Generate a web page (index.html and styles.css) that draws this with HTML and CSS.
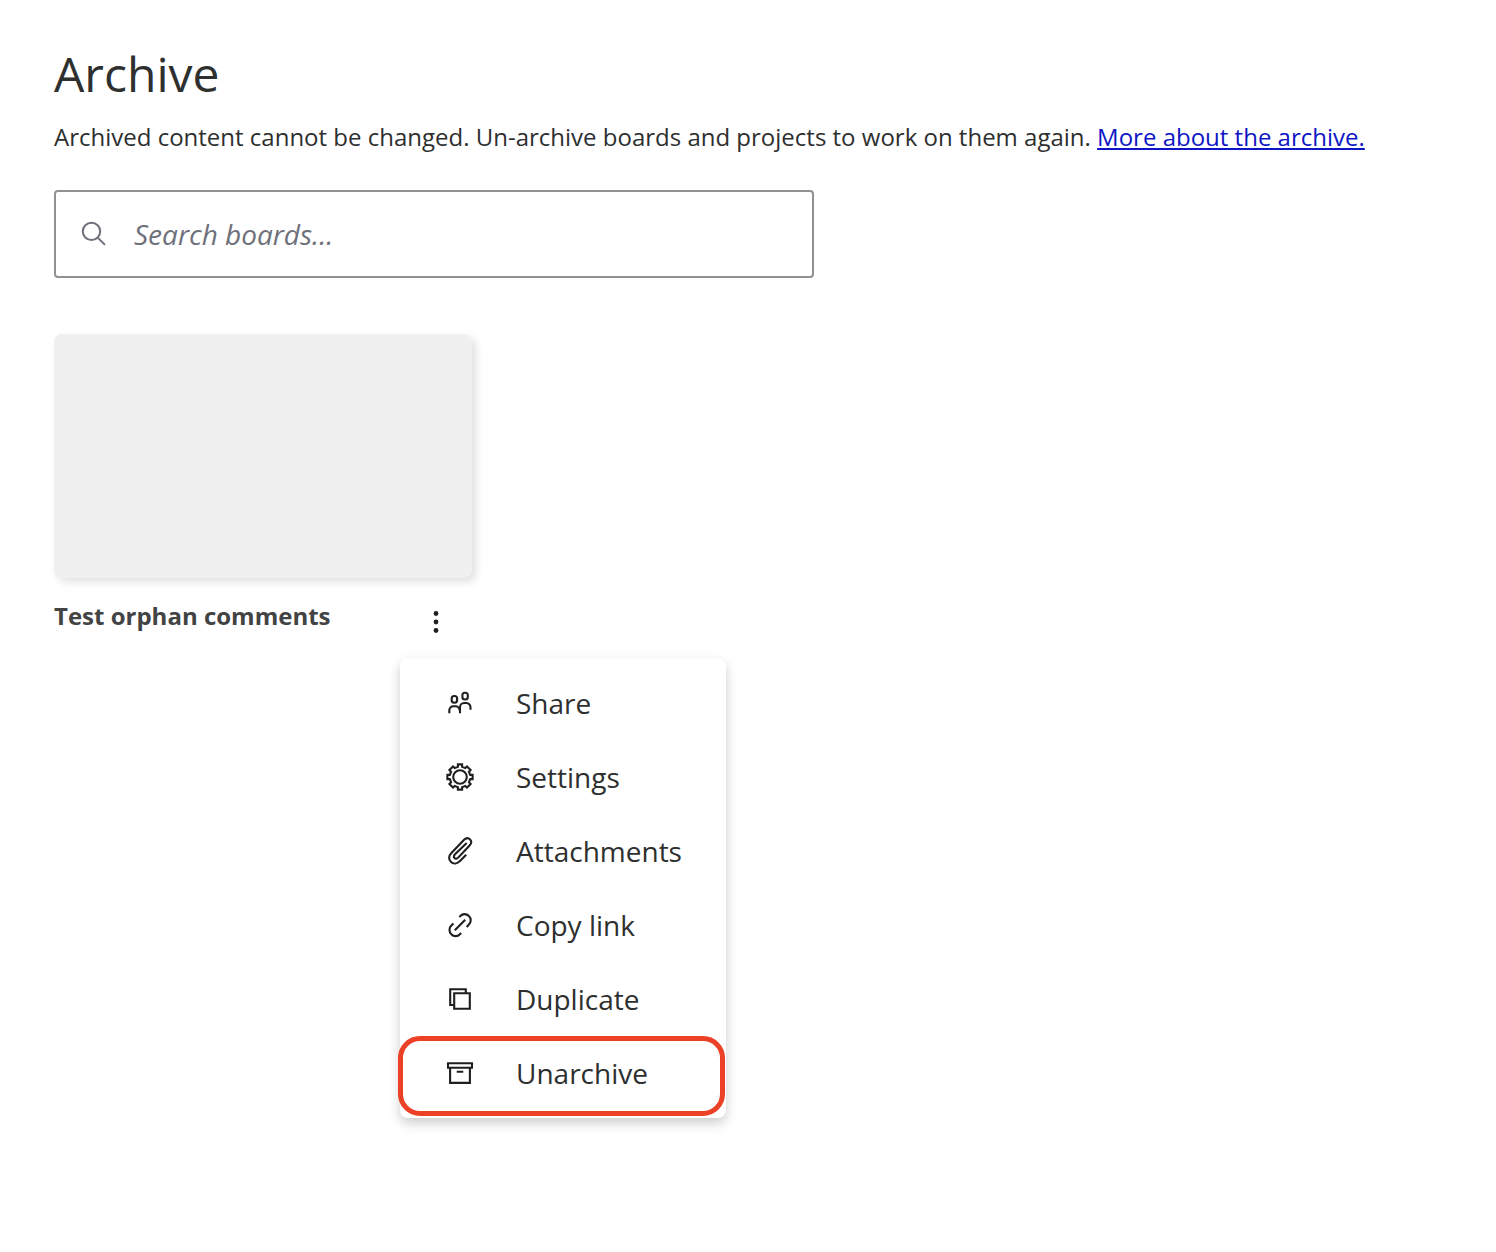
FILE: index.html
```html
<!DOCTYPE html>
<html lang="en">
<head>
  <meta charset="UTF-8" />
  <title>Archive</title>
  <link rel="stylesheet" href="styles.css">
</head>
<body>

  <h1>Archive</h1>
  <p class="intro">Archived content cannot be changed. Un-archive boards and projects to work on them again. <a href="#">More about the archive.</a></p>

  <label class="search">
    <svg class="icon" viewBox="0 0 32 32"><circle cx="13.5" cy="13.4" r="8.7"/><path d="M19.7 19.6l7.3 7.3"/></svg>
    <input type="text" placeholder="Search boards...">
  </label>

  <div class="board">
    <div class="thumbnail"></div>
    <div class="board-footer">
      <h2>Test orphan comments</h2>
      <div class="more">
        <button class="more-button" aria-label="More">
          <svg viewBox="0 0 32 32"><circle cx="16" cy="7.5" r="2.4"/><circle cx="16" cy="16" r="2.4"/><circle cx="16" cy="24.5" r="2.4"/></svg>
        </button>

        <ul class="menu">
          <li>
            <svg class="icon" viewBox="0 0 32 32"><rect x="7.7" y="9" width="5.4" height="6.7" rx="2.5"/><rect x="18.4" y="5.8" width="5.4" height="6.7" rx="2.5"/><path d="M5.3 26.2v-3a4 4 0 0 1 4-4h2.2a4 4 0 0 1 4 4M16 26.2v-6a4.2 4.2 0 0 1 4.2-4.2h2.1a4.2 4.2 0 0 1 4.2 4.2v2.6"/></svg>
            Share
          </li>
          <li>
            <svg class="icon" viewBox="0 0 32 32"><circle cx="16" cy="16" r="6.8"/><path d="M13.9 3.4h4.2v2.4l3.2 1.3 1.7-1.7 3.6 3.6-1.7 1.7 1.3 3.2h2.4v4.2h-2.4l-1.3 3.2 1.7 1.7-3.6 3.6-1.7-1.7-3.2 1.3v2.4h-4.2v-2.4l-3.2-1.3L9 26.6 5.4 23l1.7-1.7-1.3-3.2H3.4v-4.2h2.4l1.3-3.2L5.4 9 9 5.4l1.7 1.7 3.2-1.3z"/></svg>
            Settings
          </li>
          <li>
            <svg class="icon" viewBox="0 0 32 32"><path d="M22.2 19.8l-6.2 6.3c-2.8 2.8-6.5 3.2-9 .9s-2.6-6 .2-8.8L19.8 5.1c2.1-2.1 4.6-2.3 6.3-.7s1.6 4-.5 6.1L14.4 22.4c-1.3 1.4-2.9 1.7-3.9.7s-.8-2.5.5-3.8L22.7 8"/></svg>
            Attachments
          </li>
          <li>
            <svg class="icon" viewBox="0 0 32 32"><path d="M10.8 21.2L21.2 10.8M15.3 8l1-1a5.8 5.8 0 0 1 8.6 0 6 6 0 0 1 0 8.6l-2.2 2.3M9.5 14.4l-2.2 2.2a6 6 0 0 0 0 8.6 5.8 5.8 0 0 0 8.6 0l1.2-1.2"/></svg>
            Copy link
          </li>
          <li>
            <svg class="icon" viewBox="0 0 32 32"><path d="M10 22H6.2V6.2h15.6V10M10.2 10.2h15.6v15.6H10.2z"/></svg>
            Duplicate
          </li>
          <li class="highlighted">
            <svg class="icon" viewBox="0 0 32 32"><path d="M4 6.2h24v4.5H4zM6.1 10.7v15.2h19.8V10.7M12.7 14.8h6.6"/></svg>
            Unarchive
          </li>
        </ul>
      </div>
    </div>
  </div>

</body>
</html>
```

FILE: styles.css
```css
body {
  box-sizing: border-box;
  min-height: 1252px;
  margin: 0;
  padding: 42px 54px;
  font-family: 'Open Sans', sans-serif;
  color: #2e2f2f;
  background-color: #fff;
}

h1 {
  margin: 0 0 15px;
  font-size: 48px;
  font-weight: 400;
  line-height: 64px;
}

.intro {
  margin: 0 0 37px;
  font-size: 24px;
  line-height: 32px;
  white-space: nowrap;
}

.intro a {
  color: #0d15c4;
}

.icon {
  width: 32px;
  height: 32px;
  flex: none;
  fill: none;
  stroke: #1f1f1f;
  stroke-width: 2.1;
}

.search {
  display: flex;
  align-items: center;
  gap: 24px;
  box-sizing: border-box;
  width: 760px;
  height: 88px;
  padding: 0 22px;
  border: 2px solid #919193;
  border-radius: 4px;
}

.search .icon {
  stroke: #6e707a;
  stroke-width: 2;
}

.search input {
  flex: 1;
  padding: 0;
  border: none;
  outline: none;
  font: italic 28px 'Open Sans', sans-serif;
}

.search input::placeholder {
  color: #6e707a;
}

.board {
  width: 418px;
  margin-top: 56px;
}

.thumbnail {
  height: 244px;
  border-radius: 8px;
  background-color: #f0f0f0;
  box-shadow: 4px 4px 8px rgba(0, 0, 0, 0.12);
}

.board-footer {
  display: flex;
  justify-content: space-between;
  padding: 22px 20px 0 0;
}

h2 {
  margin: 0;
  font-size: 24px;
  font-weight: 700;
  line-height: 32px;
  color: #424343;
}

.more {
  position: relative;
  margin-top: 6px;
}

.more-button {
  display: block;
  padding: 0;
  border: none;
  background: none;
}

.more-button svg {
  display: block;
  width: 32px;
  height: 32px;
  fill: #1f1f1f;
}

.menu {
  position: absolute;
  top: 52px;
  left: -20px;
  box-sizing: border-box;
  width: 326px;
  margin: 0;
  padding: 8px 0;
  list-style: none;
  border-radius: 8px;
  background-color: #fff;
  box-shadow: 0 5px 12px rgba(0, 0, 0, 0.2);
}

.menu li {
  display: flex;
  align-items: center;
  gap: 40px;
  height: 74px;
  padding-left: 44px;
  font-size: 28px;
}

.highlighted {
  position: relative;
}

.highlighted::after {
  content: '';
  position: absolute;
  inset: 0 1px -6px -2px;
  border: 5px solid #ec4027;
  border-radius: 22px;
}
```
